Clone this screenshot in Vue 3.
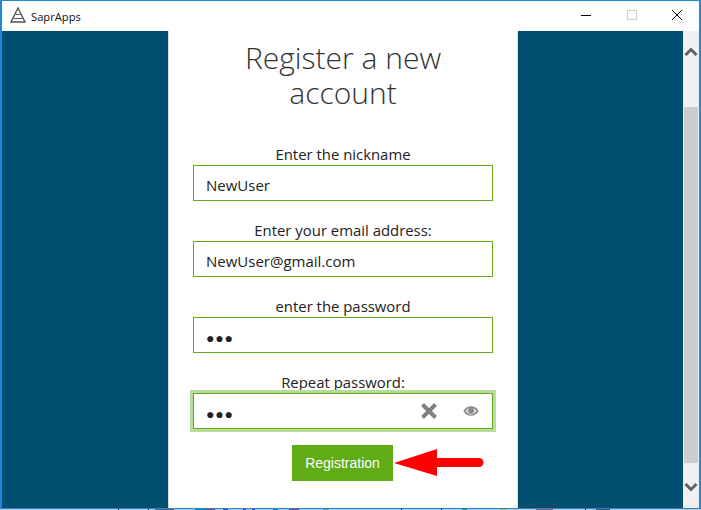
<template>
  <div class="screen">
    <div class="window">
      <header class="titlebar">
        <svg class="logo" width="16" height="16" viewBox="0 0 16 16">
          <path d="M8 1 L1 15 H15 Z" fill="none" stroke="#555" stroke-width="1.4" />
          <path d="M5.5 7.5 H10.5 M3.5 11.5 H12.5" fill="none" stroke="#555" stroke-width="1.2" />
        </svg>
        <span class="app-name">SaprApps</span>
        <div class="controls">
          <svg width="12" height="12" viewBox="0 0 12 12"><path d="M1 6.5 H11" stroke="#000" /></svg>
          <svg width="12" height="12" viewBox="0 0 12 12"><rect x="1.5" y="1.5" width="9" height="9" fill="none" stroke="#ccc" /></svg>
          <svg width="12" height="12" viewBox="0 0 12 12"><path d="M1 1 L11 11 M11 1 L1 11" stroke="#000" /></svg>
        </div>
      </header>
      <div class="body">
        <main class="content">
          <section class="panel">
            <h1>Register a new<br />account</h1>
            <div class="fields">
              <div v-for="f in fields" :key="f.label" class="field">
                <label>{{ f.label }}</label>
                <div class="input" :class="{ focused: f.focused, secret: f.secret }">
                  <span>{{ f.value }}</span>
                  <template v-if="f.focused">
                    <svg class="clear" width="18" height="18" viewBox="0 0 18 18">
                      <path d="M2.5 2.5 L15.5 15.5 M15.5 2.5 L2.5 15.5" stroke="#808080" stroke-width="4" />
                    </svg>
                    <svg class="eye" width="16" height="10" viewBox="0 0 16 10">
                      <path d="M0.3 5 C2.5 1.5 5 0.2 8 0.2 C11 0.2 13.5 1.5 15.7 5 C13.5 8.5 11 9.8 8 9.8 C5 9.8 2.5 8.5 0.3 5 Z" fill="#8a8a8a" />
                      <path d="M2.4 5 C3.6 3.5 4.6 2.6 5.6 2.2 A3.4 3.4 0 0 0 10.4 2.2 C11.4 2.6 12.4 3.5 13.6 5 C12 7 10.2 8.4 8 8.4 C5.8 8.4 4 7 2.4 5 Z" fill="#e4e4e4" />
                      <circle cx="8" cy="4.8" r="3" fill="#8a8a8a" />
                    </svg>
                  </template>
                </div>
              </div>
            </div>
            <div class="actions">
              <button class="submit">Registration</button>
              <svg class="arrow" width="92" height="30" viewBox="0 0 92 30">
                <path d="M1 15 L44 1 V10 H86 A4.5 4.5 0 0 1 86 19 H44 V28 Z" fill="#f00" />
              </svg>
            </div>
          </section>
        </main>
        <aside class="scrollbar">
          <svg width="14" height="10" viewBox="0 0 14 10"><path d="M1.5 8 L7 2.5 L12.5 8" fill="none" stroke="#606060" stroke-width="3" /></svg>
          <div class="track"><div class="thumb"></div></div>
          <svg width="14" height="10" viewBox="0 0 14 10"><path d="M1.5 2 L7 7.5 L12.5 2" fill="none" stroke="#606060" stroke-width="3" /></svg>
        </aside>
      </div>
    </div>
    <div class="desktop-edge"></div>
  </div>
</template>

<script setup>
const fields = [
  { label: 'Enter the nickname', value: 'NewUser' },
  { label: 'Enter your email address:', value: 'NewUser@gmail.com' },
  { label: 'enter the password', value: '●●●', secret: true },
  { label: 'Repeat password:', value: '●●●', secret: true, focused: true }
]
</script>

<style>
html, body {
  margin: 0;
  overflow: hidden;
}
</style>

<style scoped>
.screen {
  width: 701px;
  height: 510px;
  display: flex;
  flex-direction: column;
  overflow: hidden;
}
.window {
  flex: 1;
  min-height: 0;
  box-sizing: border-box;
  border: 2px solid #1e88dc;
  border-top-width: 1px;
  border-bottom-width: 1px;
  background: #fff;
  display: flex;
  flex-direction: column;
  font-family: "Open Sans", "Noto Sans", sans-serif;
  color: #222;
}
.desktop-edge {
  height: 1px;
  flex: none;
  background: linear-gradient(to right,
    #c8c8c8 118px, #000 118px, #000 119px, #c8c8c8 119px,
    #c8c8c8 148px, #000 148px, #000 149px, #c8c8c8 149px,
    #c8c8c8 155px, #556070 155px, #556070 174px, #c8c8c8 174px,
    #c8c8c8 195px, #1e8a7a 195px, #1e8a7a 205px, #a04050 205px, #a04050 215px, #c8c8c8 215px,
    #c8c8c8 223px, #5a3a9a 223px, #5a3a9a 228px, #c8c8c8 228px,
    #c8c8c8 243px, #5a3a9a 243px, #5a3a9a 246px, #c8c8c8 246px,
    #c8c8c8 252px, #5a3a9a 252px, #5a3a9a 255px, #c8c8c8 255px,
    #c8c8c8 273px, #1e8a7a 273px, #1e8a7a 278px, #c8c8c8 278px,
    #c8c8c8 289px, #a04050 289px, #a04050 299px, #c8c8c8 299px,
    #c8c8c8 323px, #8a9a70 323px, #8a9a70 329px, #c8c8c8 329px,
    #c8c8c8 401px, #000 401px, #000 402px, #c8c8c8 402px,
    #c8c8c8 441px, #000 441px, #000 442px, #c8c8c8 442px,
    #c8c8c8 462px, #4a8a3a 462px, #4a8a3a 467px, #c8c8c8 467px,
    #c8c8c8 500px, #c8b030 500px, #c8b030 507px, #c8c8c8 507px,
    #c8c8c8 536px, #a05060 536px, #a05060 553px, #c8c8c8 553px,
    #c8c8c8 585px, #000 585px, #000 586px, #c8c8c8 586px,
    #c8c8c8 596px, #404850 596px, #404850 610px, #c8c8c8 610px);
}
.titlebar {
  height: 30px;
  box-sizing: border-box;
  display: flex;
  align-items: center;
  padding: 0 0 2px 8px;
  flex: none;
}
.app-name {
  margin: 2px 0 0 5px;
  font-size: 11.2px;
  color: #111;
}
.controls {
  margin-left: auto;
  display: flex;
  gap: 33.5px;
  padding-right: 16px;
}
.body {
  flex: 1;
  display: flex;
  min-height: 0;
}
.content {
  flex: 1;
  background: #024e70;
  display: flex;
  justify-content: center;
  padding-left: 1px;
}
.panel {
  width: 350px;
  background: #fff;
  border-left: 1px solid #d8d8d8;
  border-right: 1px solid #e4dde4;
  box-sizing: border-box;
  padding: 9px 24px 0;
}
h1 {
  margin: 0 0 35px;
  font-size: 30px;
  font-weight: 300;
  line-height: 35px;
  text-align: center;
  color: #333;
}
.fields {
  display: flex;
  flex-direction: column;
  gap: 20px;
}
label {
  display: block;
  text-align: center;
  font-size: 14.9px;
  line-height: 18px;
  height: 20px;
}
.input {
  height: 36px;
  box-sizing: border-box;
  border: 1px solid #60ab16;
  display: flex;
  align-items: center;
  padding: 0 12px;
  font-size: 15px;
  line-height: 20px;
}
.input span {
  flex: 1;
  padding-top: 4px;
}
.secret span {
  font-size: 14px;
  letter-spacing: 0.8px;
  padding-top: 5px;
}
.focused {
  outline: 3px solid #b9dc9a;
}
.clear {
  margin-right: 25px;
}
.eye {
  margin-right: 1px;
}
.actions {
  position: relative;
  display: flex;
  justify-content: center;
  margin-top: 16px;
  padding-right: 1px;
}
.submit {
  width: 101px;
  height: 36px;
  border: 0;
  background: #60ab16;
  color: #fff;
  font-family: "Liberation Sans", Arial, sans-serif;
  font-size: 14px;
  padding: 0;
}
.arrow {
  position: absolute;
  left: 200px;
  top: 3px;
}
.scrollbar {
  width: 16px;
  background: #f0f0f0;
  display: flex;
  flex-direction: column;
  align-items: center;
  flex: none;
}
.scrollbar > svg {
  flex: none;
  margin: 16px 0;
}
.track {
  flex: 1;
  width: 100%;
  display: flex;
  justify-content: center;
  padding-top: 34px;
}
.thumb {
  width: 14px;
  height: 356px;
  background: #cdcdcd;
}
</style>
